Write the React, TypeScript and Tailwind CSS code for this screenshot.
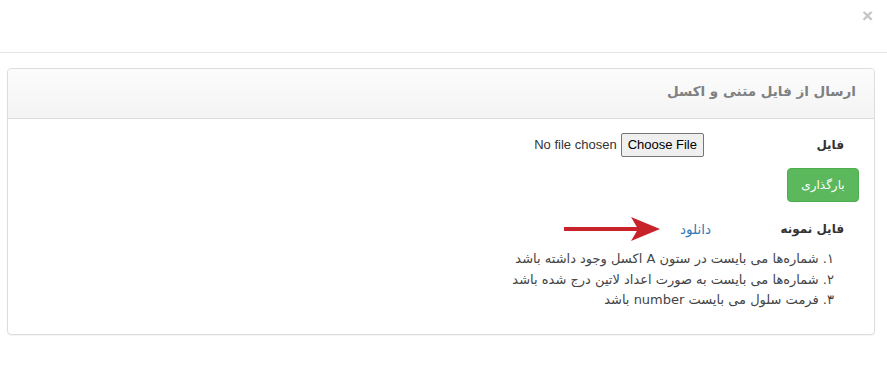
import React from 'react';

const fa = { fontFamily: '"DejaVu Sans", "Noto Sans", sans-serif' };

function RedArrow() {
  return (
    <svg width="96" height="26" viewBox="0 0 96 26" className="shrink-0">
      <rect x="0" y="11" width="74" height="4" fill="#c8232b" />
      <polygon points="67,1 96,13 67,25 74,13" fill="#c8232b" />
    </svg>
  );
}

export default function App() {
  const notes = [
    '۱. شماره‌ها می بایست در ستون A اکسل وجود داشته باشد',
    '۲. شماره‌ها می بایست به صورت اعداد لاتین درج شده باشد',
    '۳. فرمت سلول می بایست number باشد',
  ];

  return (
    <div dir="rtl" className="w-[887px] h-[368px] bg-white text-[#333]" style={fa}>
      {/* modal header */}
      <div className="h-[53px] border-b border-[#e5e5e5] flex items-start justify-start pr-[14px] pt-[6px]">
        <span className="text-[#c4c4c4] text-[19px] font-bold leading-none" style={{ fontFamily: '"Liberation Sans", sans-serif' }}>
          ×
        </span>
      </div>

      {/* modal body */}
      <div className="pt-[15px] pr-[12px] pl-[7px]">
        <div className="border border-[#dddddd] rounded-[4px] shadow-[0_1px_1px_rgba(0,0,0,0.05)]">
          <div className="h-[50px] bg-gradient-to-b from-[#fcfcfc] to-[#f4f4f4] border-b border-[#dddddd] rounded-t-[4px] flex items-center pr-[18px] pb-[4px]">
            <h3 className="text-[13.5px] font-bold text-[#808080]">ارسال از فایل متنی و اکسل</h3>
          </div>

          <div className="pt-[15px] pb-[23px]">
            {/* file row */}
            <div className="flex items-center pr-[30px] h-[22px]">
              <label className="w-[140px] text-[12px] font-bold text-[#333]">فایل</label>
              <input
                type="file"
                dir="rtl"
                className="text-[13px] text-[#333] file:text-[13px] file:text-black file:bg-[#efefef] file:border file:border-solid file:border-[#767676] file:rounded-[2px] file:px-[6px] file:py-[1px] file:ml-[4px]"
                style={{ fontFamily: '"Liberation Sans", Arial, sans-serif' }}
              />
            </div>

            {/* upload button */}
            <div className="flex pr-[15px] mt-[12px]">
              <button className="h-[34px] w-[72px] rounded-[4px] bg-[#5cb85c] border border-[#4cae4c] text-white text-[12px] font-medium">
                بارگذاری
              </button>
            </div>

            {/* sample file row */}
            <div className="flex items-center pr-[30px] mt-[14px] h-[26px]">
              <span className="w-[133px] text-[12px] font-bold text-[#333]">فایل نمونه</span>
              <a className="text-[13.5px] text-[#337ab7] ml-[20px]">دانلود</a>
              <RedArrow />
            </div>

            {/* notes */}
            <ol className="pr-[40px] mt-[7px] text-[13px] text-[#444] leading-[20.5px]">
              {notes.map((n) => (
                <li key={n}>{n}</li>
              ))}
            </ol>
          </div>
        </div>
      </div>
    </div>
  );
}
